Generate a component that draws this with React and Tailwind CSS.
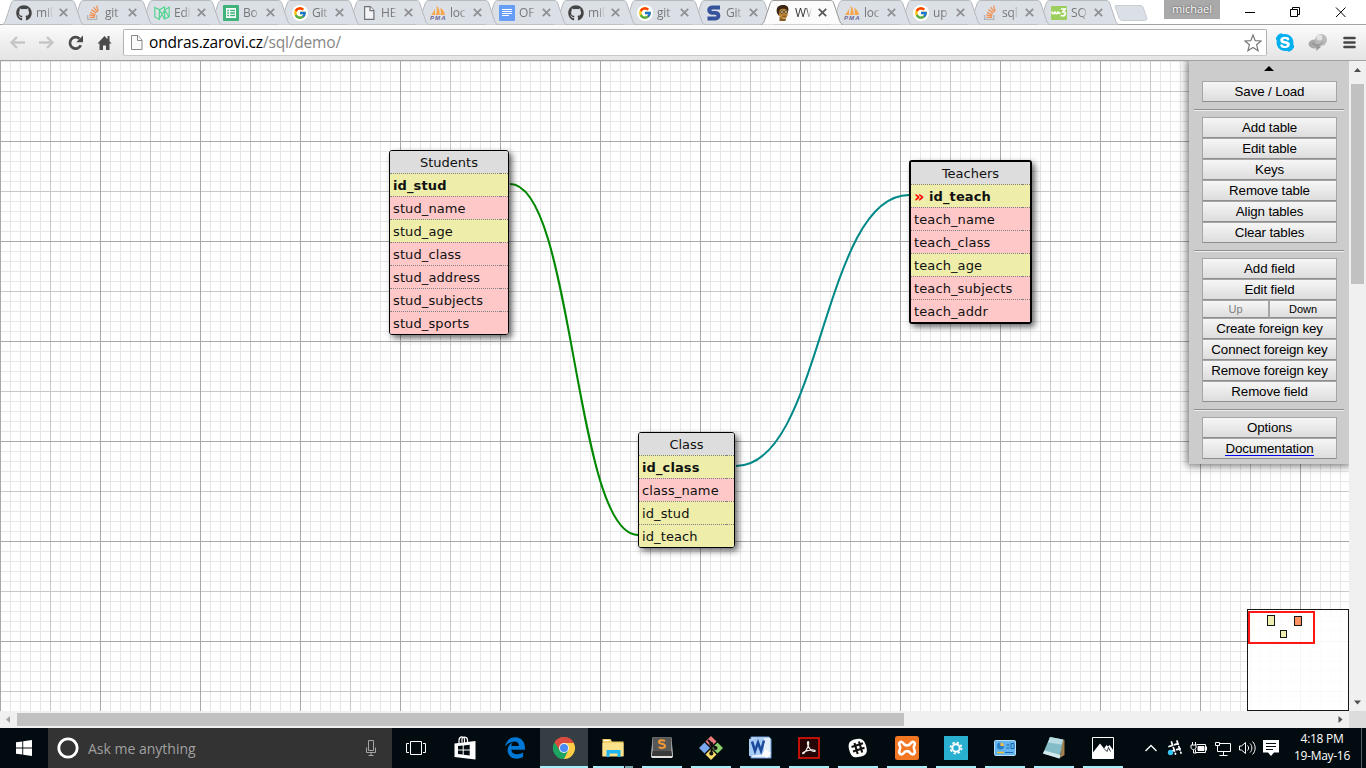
import React from "react";
import { FaGithub, FaSkype, FaEdgeLegacy } from "react-icons/fa";
import { FcGoogle } from "react-icons/fc";

const GoogleFav = () => (
  <svg viewBox="0 0 16 16" className="h-4 w-4">
    <circle cx="8" cy="8" r="8" fill="#fff" />
    <FcGoogle x="1" y="1" width="14" height="14" size="14" />
  </svg>
);

const PageFav = () => (
  <svg viewBox="0 0 16 16" className="h-4 w-4" fill="#f3f4f6" stroke="#6e7276" strokeWidth="1.2">
    <path d="M3.6 1.6h5.6l3.7 3.8v9H3.6z" />
    <path d="M9 1.6v4h3.9" />
  </svg>
);

const StackFav = () => (
  <svg viewBox="0 0 16 16" className="h-4 w-4" fill="none">
    <path d="M2.6 10v4.4h9.2V10" stroke="#b2b4b8" strokeWidth="1.3" />
    <path d="M4.4 12.4h5.6M4.5 10l5.6 1M5 7.4l5.4 2.4M6.4 4.6l4.9 3.5M8.6 2.2l3.7 4.8M11.6.8l1.6 5.6" stroke="#f0945a" strokeWidth="1.3" />
  </svg>
);

const PmaFav = () => (
  <svg viewBox="0 0 16 16" className="h-4 w-4">
    <path d="M1 10C3 8 4 6 4.600 3.500L5.400 10zM6 10C7 7 7 4 6.600.5 9 3 10 7 9.600 10zM10.500 10C11 7 11 5 10 2.500 13 4 14.500 7 15 10z" fill="#f8a64b" />
    <text x="0" y="15.4" fontSize="6" fontWeight="bold" fontStyle="italic" fontFamily="Liberation Sans, sans-serif" fill="#6b6798" textLength="15.5">PMA</text>
  </svg>
);

const MediumFav = () => (
  <svg viewBox="0 0 16 16" className="h-4 w-4" fill="none" stroke="#4ed58c" strokeWidth="1.1">
    <path d="M.8 2.400 5.400 4.700V14.300L.8 12zM5.400 4.700 10.600 2v3.300L5.800 13M5.400 4.700l5.200 9.200 4.600-2.300V2.300L10.600 5.100v8.800M10.600 5.100 15.200 12" />
  </svg>
);

const SheetsFav = () => (
  <svg viewBox="0 0 16 16" className="h-4 w-4">
    <rect width="16" height="16" rx="1" fill="#40b37a" />
    <rect x="3" y="3" width="10" height="10" fill="#fff" />
    <path d="M4.200 5.500h1.800M7.200 5.500h4.800M4.200 8h1.800M7.200 8h4.800M4.200 10.500h1.800M7.200 10.500h4.800" stroke="#40b37a" strokeWidth="1.300" />
  </svg>
);

const DocsFav = () => (
  <svg viewBox="0 0 16 16" className="h-4 w-4">
    <rect width="16" height="16" rx="1" fill="#669df6" />
    <path d="M3 4.500h10M3 6.500h10M3 8.500h10M3 10.500h7" stroke="#fff" strokeWidth="1" />
  </svg>
);

const SFav = () => (
  <svg viewBox="0 0 16 16" className="h-4 w-4">
    <path d="M14 2.500H7C1.800 2.500 2.300 7.900 6.500 7.900h2.500c4.500 0 4.500 5.600.3 5.600H1.500" fill="none" stroke="#35549b" strokeWidth="3.900" />
  </svg>
);

const FaceFav = () => (
  <svg viewBox="0 0 16 16" className="h-4 w-4">
    <path d="M2 8C.5 2 4 0 8 0c4.500 0 6 2.500 5.200 6L12 9 4 11z" fill="#3a2411" />
    <path d="M4.500 5c2-1.800 5.500-1.800 7.500 0l.8 5-1.800 3.300-4 .7L4 10.500z" fill="#c08638" />
    <path d="M4.500 11.500l3 2.500 3.500-.5L10.500 16H4.500z" fill="#8a5a20" />
    <circle cx="7" cy="7" r="1.400" fill="#efe3b8" stroke="#3b2a18" strokeWidth=".8" />
    <circle cx="11" cy="7" r="1.400" fill="#efe3b8" stroke="#3b2a18" strokeWidth=".8" />
    <path d="M7.500 11.200h4" stroke="#7c4a1b" />
  </svg>
);

const W3Fav = () => (
  <svg viewBox="0 0 16 16" className="h-4 w-4">
    <rect width="16" height="14" y="1" rx="1" fill="#9ccf5e" />
    <path d="M.8 6.500c.5 3 2.500 3 3 0 .5 3 2.500 3 3 0 .5 2 1.500 2.500 2.500 1M10 4h4.200L12 7c4-.5 3 5-2.300 3.500" fill="none" stroke="#fff" strokeWidth="1.600" />
  </svg>
);

const GithubFav = () => <FaGithub size={16} color="#444" />;

const tabs = [
  { Icon: GithubFav, t: "mil" },
  { Icon: StackFav, t: "git" },
  { Icon: MediumFav, t: "Edi" },
  { Icon: SheetsFav, t: "Bo" },
  { Icon: GoogleFav, t: "Git" },
  { Icon: PageFav, t: "HE" },
  { Icon: PmaFav, t: "loc" },
  { Icon: DocsFav, t: "OF" },
  { Icon: GithubFav, t: "mil" },
  { Icon: GoogleFav, t: "git" },
  { Icon: SFav, t: "Git" },
  { Icon: FaceFav, t: "WW", active: true },
  { Icon: PmaFav, t: "loc" },
  { Icon: GoogleFav, t: "up" },
  { Icon: StackFav, t: "sql" },
  { Icon: W3Fav, t: "SQ" },
];

function Tab({ Icon, t, active, z }) {
  return (
    <div className="relative h-[25px] w-[69px] shrink-0" style={{ zIndex: z }}>
      <svg className="absolute top-0 left-0 h-[25px] w-[82px]" viewBox="0 0 82 25">
        <path
          d="M0 24.500C2 24 2.500 23 3.500 20.500L9 4C9.800 1.500 10.500.5 13 .5H69C71.500.5 72.200 1.500 73 4L78.500 20.500C79.500 23 80 24 82 24.500"
          fill={active ? "#fbfbfb" : "#dbdfe6"}
          stroke={active ? "#999" : "#b6b9be"}
        />
      </svg>
      <div className="relative flex h-[25px] items-center pl-[14px]">
        <div className="flex h-4 w-4 shrink-0 items-center"><Icon /></div>
        <div
          className={
            "ml-[4px] w-[17px] overflow-hidden [mask-image:linear-gradient(to_right,black_60%,transparent)] font-['Open_Sans',sans-serif] text-[12px] leading-[18px] tracking-[-0.2px] whitespace-nowrap " +
            (active ? "text-[#333]" : "text-[#777]")
          }
        >
          {t}
        </div>
        <svg viewBox="0 0 9 9" className="ml-[6px] h-[9px] w-[9px] shrink-0" stroke={active ? "#555" : "#8d8f93"} strokeWidth="1.700">
          <path d="M.8.800l7.400 7.400M8.200.800L.8 8.200" />
        </svg>
      </div>
    </div>
  );
}

function TabStrip() {
  return (
    <div className="relative z-10 flex h-[25px] items-start bg-white pl-[2px] shadow-[inset_0_-1px_0_#a3a3a3]">
      {tabs.map((tab, i) => (
        <Tab key={i} {...tab} z={tab.active ? 40 : 30 - i} />
      ))}
      <svg className="ml-[8px] mt-[4px] h-[18px] w-[34px] shrink-0" viewBox="0 0 34 18">
        <path d="M2 1.500h24c2 0 2.500.5 3.200 2l3.300 9.500c.8 2.500 0 3.500-2 3.500H9c-2 0-3-.5-3.700-2L1.500 4C1 2.500 1 1.500 2 1.500z" fill="#dbdfe6" stroke="#c9ccd1" />
      </svg>
      <div className="ml-[16px] flex h-[19px] w-[56px] items-center justify-center bg-[#a9a9a9] font-['Open_Sans',sans-serif] text-[11px] text-white [text-shadow:0_0_2px_#333]">
        <span className="-mt-[1px]">michael</span>
      </div>
      <svg className="ml-auto h-[24px] w-[130px]" viewBox="1236 0 130 24" fill="none" stroke="#000">
        <path d="M1245 12.500h10M1290.500 9.500h7v7h-7zM1292.500 9v-1.500h7v7h-1.500M1336 7.500l9.500 9.500M1345.500 7.500L1336 17" />
      </svg>
    </div>
  );
}

function Toolbar() {
  return (
    <div className="flex h-[36px] items-center border-b border-[#a2a2a2] bg-gradient-to-b from-[#fbfbfb] to-[#e4e4e4]">
      <svg className="h-[35px] w-[123px] shrink-0" viewBox="0 25 123 35" fill="none">
        <path d="M25 42.500H11.500M17 37l-5.500 5.500L17 48M39 42.500h13.500M47 37l5.500 5.500L47 48" stroke="#c6c6c6" strokeWidth="2.400" />
        <path d="M80.800 45.300A5.700 5.700 0 1 1 79.500 38.700" stroke="#4b4b4b" strokeWidth="2.700" />
        <path d="M83 35.500v6.800h-6.800z" fill="#4b4b4b" />
        <path d="M97.500 43.500L104.500 36l3 3.200V36h2v5.300l2.200 2.200H109.500V50H106v-4.500h-3V50H99.500v-6.500z" fill="#4b4b4b" />
      </svg>
      <div className="flex h-[27px] w-[1144px] items-center rounded-[2px] border border-[#b2b2b2] border-b-[#c8c8c8] bg-white pr-[4px] pl-[6px]">
        <svg viewBox="0 0 13 16" className="h-4 w-[13px]" fill="#fafafa" stroke="#8a8a8a">
          <path d="M1.500.5h6.500l4 4.500v9.500h-10.500z" />
          <path d="M7.500.5v5h4.500" />
        </svg>
        <div className="ml-[6px] pb-[2px] font-['Open_Sans',sans-serif] text-[15.500px] leading-[20px] tracking-[-0.170px] text-[#858585]">
          <span className="text-black">ondras.zarovi.cz</span>/sql/demo/
        </div>
        <svg viewBox="0 0 18 18" className="ml-auto h-[18px] w-[18px]" fill="#fff" stroke="#777" strokeWidth="1.200">
          <path d="M9 1l2.200 5.600 5.900.4-4.500 3.800 1.500 5.900L9 13.500l-5.100 3.200 1.500-5.900L.9 7l5.900-.4z" />
        </svg>
      </div>
      <div className="flex h-[35px] w-[99px] shrink-0 items-center">
        <div className="ml-[8px] flex h-[20px] w-[20px] items-center justify-center">
          <FaSkype size={21} color="#00aff0" className="rounded-full bg-[radial-gradient(circle,white_50%,transparent_51%)]" />
        </div>
        <svg className="h-[35px] w-[71px] shrink-0" viewBox="1295 25 71 35">
          <ellipse cx="1315" cy="44" rx="6.500" ry="4.500" fill="#a9a9a9" />
          <path d="M1317 45l-1 6 5-4z" fill="#999" />
          <circle cx="1321" cy="40" r="6" fill="#b9b9b9" />
          <circle cx="1319.500" cy="37.500" r="3" fill="#e2e2e2" />
          <path d="M1312 43c2 3 8 3 11-1" fill="none" stroke="#8b8b8b" />
          <path d="M1344.500 38h10M1344.500 42.500h10M1344.500 47h10" stroke="#474747" strokeWidth="2.600" strokeLinecap="round" />
        </svg>
      </div>
    </div>
  );
}

function Row({ name, kind, bold, mark }) {
  const bg = { num: "bg-[#eeeeaa]", txt: "bg-[#ffc8c8]", head: "bg-[#dddddd]" }[kind];
  return (
    <div className={"flex h-[23px] first:h-[22px] " + bg}>
      {kind === "head" ? (
        <div className="flex-1 text-center leading-[23px]">{name}</div>
      ) : (
        <>
          <div className={"flex flex-1 border-t border-dotted border-[#808080] pl-[3px] leading-[24px] tracking-[0.110px] whitespace-nowrap " + (bold ? "font-bold" : "")}>
            {mark && <span className="w-[15px] text-[16px] leading-[23px] text-[#ff0000]">»</span>}
            {name}
          </div>
          <div className="w-[8px] border-t border-dotted border-[#808080]" />
        </>
      )}
    </div>
  );
}

function DbTable({ place, title, rows }) {
  return (
    <div className={"absolute rounded-[3px] border-black font-['DejaVu_Sans',sans-serif] text-[13px] text-[#111] shadow-[3px_3px_6px_rgba(0,0,0,0.6)] overflow-clip " + place}>
      <Row name={title} kind="head" />
      {rows.map((r) => (
        <Row key={r[0]} name={r[0]} kind={r[1]} bold={r[2]} mark={r[3]} />
      ))}
    </div>
  );
}

const Btn = ({ children, small, disabled, link }) => (
  <button
    className={
      "flex items-center justify-center border border-[#a5a5a5] border-b-[#8f8f8f] bg-gradient-to-b from-[#f6f6f6] to-[#dddddd] rounded-[1px] font-['Liberation_Sans',sans-serif] " +
      (small ? "h-[18px] text-[11px] " : "h-[21px] w-full text-[13.333px] tracking-[-0.120px] ") +
      (disabled ? "w-[67px] text-[#808080] " : "text-black ") +
      (small && !disabled ? "w-[68px] " : "")
    }
  >
    {link ? <span className="border-b border-[#0000ee] leading-[13px]">{children}</span> : children}
  </button>
);

const Rule = () => <div className="-mr-[7px] -ml-[8px] my-[7px] h-[2px] border-t border-b border-t-[#8f8f8f] border-b-[#eeeeee]" />;

function Sidebar() {
  return (
    <div className="absolute top-0 right-0 h-[403px] w-[160px] bg-[#cccccc] pr-[12px] pl-[13px] shadow-[0_0_8px_2px_rgba(0,0,0,0.550)]">
      <div className="flex h-[20px] justify-center pt-[5px] pr-[1px]">
        <svg viewBox="0 0 10 5" className="h-[5px] w-[10px]"><path d="M0 5L5 0l5 5z" /></svg>
      </div>
      <Btn>Save / Load</Btn>
      <Rule />
      <div className="-mt-[1px]">
        <Btn>Add table</Btn>
        <Btn>Edit table</Btn>
        <Btn>Keys</Btn>
        <Btn>Remove table</Btn>
        <Btn>Align tables</Btn>
        <Btn>Clear tables</Btn>
      </div>
      <Rule />
      <div className="-mt-[1px]">
        <Btn>Add field</Btn>
        <Btn>Edit field</Btn>
        <div className="flex">
          <Btn small disabled>Up</Btn>
          <Btn small>Down</Btn>
        </div>
        <Btn>Create foreign key</Btn>
        <Btn>Connect foreign key</Btn>
        <Btn>Remove foreign key</Btn>
        <Btn>Remove field</Btn>
      </div>
      <Rule />
      <div className="-mt-[1px]">
        <Btn>Options</Btn>
        <Btn link>Documentation</Btn>
      </div>
    </div>
  );
}

function Minimap() {
  return (
    <div className="absolute right-0 bottom-0 h-[102px] w-[102px] border border-black bg-white opacity-90">
      <div className="absolute top-[5px] left-[19px] h-[11px] w-[8px] border border-black bg-[#eeeeaa]" />
      <div className="absolute top-[6px] left-[46px] h-[10px] w-[8px] border border-black bg-[#ff8855]" />
      <div className="absolute top-[20px] left-[32px] h-[8px] w-[7px] border border-black bg-[#eeeeaa]" />
      <div className="absolute top-[1px] left-0 h-[33px] w-[67px] border-2 border-[#ff0000]" />
    </div>
  );
}

function Canvas() {
  return (
    <div className="relative h-[650px] w-[1349px] overflow-hidden bg-white">
      <svg className="absolute inset-0 h-[650px] w-[1349px]" viewBox="0 0 1349 650">
        <defs>
          <pattern id="grid" width="100" height="100" y="-20" patternUnits="userSpaceOnUse">
            <g shapeRendering="crispEdges" fill="none">
              <path
                stroke="#e6e6e6"
                d="M10.500 0v100M20.500 0v100M30.500 0v100M40.500 0v100M60.500 0v100M70.500 0v100M80.500 0v100M90.500 0v100M0 10.500h100M0 20.500h100M0 30.500h100M0 40.500h100M0 60.500h100M0 70.500h100M0 80.500h100M0 90.500h100"
              />
              <path stroke="#c8c8c8" d="M50.500 0v100M0 50.500h100" />
              <path stroke="#a8a8a8" d="M.5 0v100M0 .5h100" />
            </g>
          </pattern>
        </defs>
        <rect width="1349" height="650" fill="url(#grid)" />
        <path d="M510 123C574 123 574 474 638 474" fill="none" stroke="#008800" strokeWidth="2" />
        <path d="M736 405C822 405 822 134 909 134" fill="none" stroke="#008888" strokeWidth="2" />
      </svg>
      <DbTable
        place="left-[389px] top-[89px] w-[120px] border"
        title="Students"
        rows={[
          ["id_stud", "num", true],
          ["stud_name", "txt"],
          ["stud_age", "num"],
          ["stud_class", "txt"],
          ["stud_address", "txt"],
          ["stud_subjects", "txt"],
          ["stud_sports", "txt"],
        ]}
      />
      <DbTable
        place="left-[909px] top-[99px] w-[123px] border-2"
        title="Teachers"
        rows={[
          ["id_teach", "num", true, true],
          ["teach_name", "txt"],
          ["teach_class", "txt"],
          ["teach_age", "num"],
          ["teach_subjects", "txt"],
          ["teach_addr", "txt"],
        ]}
      />
      <DbTable
        place="left-[638px] top-[371px] w-[97px] border"
        title="Class"
        rows={[
          ["id_class", "num", true],
          ["class_name", "txt"],
          ["id_stud", "num"],
          ["id_teach", "num"],
        ]}
      />
      <Sidebar />
      <Minimap />
    </div>
  );
}

const Arrow = ({ d, fill = "#505050" }) => (
  <svg viewBox="0 0 17 17" className="h-[17px] w-[17px] shrink-0"><path d={d} fill={fill} /></svg>
);

const I = ({ children }) => (
  <svg viewBox="0 0 24 24" className="h-[24px] w-[24px]" fill="none">{children}</svg>
);

const TaskViewIcon = () => (
  <I>
    <path d="M6.500 5.500h11v13h-11zM5 7.500H2.500v9H5M19 7.500h2.500v9H19" stroke="#fff" />
  </I>
);
const StoreIcon = () => (
  <I>
    <path d="M1.500 7.500l21-2.500v18.500L1.500 21z" fill="#fff" />
    <path d="M6 7V4.500C6 0 11 0 11.500 3V7M9 6.500V3c0-3 5.500-2.500 5.500 1V6" stroke="#fff" strokeWidth="1.200" />
    <path d="M5 10l4.700-.5v4H5zM10.700 9.400l6-.7v4.800h-6zM5 14.500h4.700v4L5 18zM10.700 14.500h6v5l-6-.8z" fill="#020b0f" />
  </I>
);
const EdgeIcon = () => <FaEdgeLegacy size={22} color="#0078d7" />;
const ChromeIcon = () => (
  <I>
    <path d="M12 12L2.470 6.500A11 11 0 0 1 21.530 6.500z" fill="#db4b3f" />
    <path d="M12 12L2.470 6.500A11 11 0 0 0 12 23z" fill="#1da462" />
    <path d="M12 12L12 23A11 11 0 0 0 21.530 6.500H12z" fill="#ffcd46" />
    <path d="M12 7H21.800A11 11 0 0 0 2.470 6.500L7.700 14.500z" fill="#db4b3f" />
    <path d="M7.500 14.500L2.470 6.500A11 11 0 0 0 12 23L16.300 14.500z" fill="#1da462" />
    <circle cx="12" cy="12" r="5" fill="#f1f1f1" />
    <circle cx="12" cy="12" r="4" fill="#4c8bf5" />
  </I>
);
const ExplorerIcon = () => (
  <I>
    <path d="M1.500 3h8l1.500 2.500h11.500V20h-21z" fill="#f1ce66" />
    <path d="M1.500 7h21v13.500h-21z" fill="#fae28c" />
    <path d="M2.500 4.500h6" stroke="#fff" />
    <path d="M5.500 14h14v7h-3v-3.500h-8V21h-3z" fill="#1fb5f0" />
  </I>
);
const SublimeIcon = () => (
  <I>
    <path d="M2.500 1.500h19l1.500 19-1 1.500H2L1 20.500z" fill="#e0e0e0" />
    <rect x="2.500" y="1.500" width="19" height="14.500" rx="1.500" fill="#575757" />
    <path d="M2.500 15h19l.8 5H1.700z" fill="#3a3a3a" />
    <path d="M15 5c-2.500-1.300-6-1-6 .9 0 2.300 6 1.400 6 4 0 2.300-3.500 2.500-6.300 1.200" stroke="#f49a35" strokeWidth="2" />
  </I>
);
const GitIcon = () => (
  <I>
    <path d="M12 0l5.500 5.500L12 11 6.500 5.500z" fill="#ee7b80" />
    <path d="M18.500 6.500L24 12l-5.500 5.500L13 12z" fill="#8cd16b" />
    <path d="M12 13l5.500 5.500L12 24l-5.500-5.500z" fill="#f7dc6b" />
    <path d="M5.500 6.500L11 12l-5.500 5.500L0 12z" fill="#79a8ef" />
    <path d="M9 4l3.500 3.500v10M12.500 8l4 4" stroke="#111" strokeWidth="2" />
    <circle cx="12.300" cy="8" r="2" fill="#111" /><circle cx="16.500" cy="12" r="2" fill="#111" /><circle cx="12.300" cy="17.500" r="2" fill="#111" />
  </I>
);
const WordIcon = () => (
  <I>
    <path d="M3 1h18l2 2v19H3z" fill="#e4effc" stroke="#6c9bdc" />
    <path d="M1 3l15-2v17L1 20z" fill="#a9ccf5" />
    <path d="M4 5.500l3 9.500 3-8.500 3 8.500 3-10.500" stroke="#1b4a9b" strokeWidth="2.500" />
    <path d="M17 13l6 4-4 5-5-3z" fill="#fff" />
  </I>
);
const AcrobatIcon = () => (
  <I>
    <rect x="2" y="2" width="20" height="20" fill="#250505" stroke="#e01208" strokeWidth="1.700" />
    <path d="M6 16.500c-1 1.500.5 2 2-.5 2-3 4-7 3.700-9.500-.7-2-2 0-.7 3 1.500 3.500 4 6 6.500 6 1.800-.3.500-2-3-1.700-3 .2-5 .8-8.500 2.700z" stroke="#eee" strokeWidth="1.200" />
  </I>
);
const SlackIcon = () => (
  <I>
    <path d="M8 3.500c7-2 10-.500 12 6 2 7 .5 9.500-5 11-7 2-9.500.500-11.500-5.500-2-7-.5-10 4.500-11.500z" fill="#fff" />
    <path d="M8.500 7l3.200 11M13 5.500l3.200 11M5.500 11l11.500-3.700M7 15.500l11.500-3.700" stroke="#111" strokeWidth="2.100" />
  </I>
);
const XamppIcon = () => (
  <I>
    <rect width="24" height="24" rx="2.500" fill="#f37623" />
    <path d="M8.500 7.500C6 4 3 7 4.800 9.800c.9 1.200.9 2.200 0 3.700-2 4 1.500 6.500 3.900 3.500 1.500-2.500 5-2.500 6.600 0 2.400 3 5.900.5 3.900-3.500-.9-1.500-.9-2.500 0-3.700C21 7 18 4 15.500 7.500c-1.500 2.500-5.500 2.500-7 0z" stroke="#fff" strokeWidth="2.600" />
  </I>
);
const SettingsIcon = () => (
  <I>
    <rect width="24" height="24" fill="#29b0d0" />
    <circle cx="12" cy="12" r="3.700" stroke="#fff" strokeWidth="2" />
    <circle cx="12" cy="12" r="5.500" stroke="#fff" strokeWidth="1.800" strokeDasharray="2.300 2.020" />
  </I>
);
const PanelIcon = () => (
  <I>
    <rect x="1.500" y="4.500" width="21" height="15" rx="1" fill="#63b5ef" stroke="#b7ddf7" />
    <circle cx="7.500" cy="10" r="3.500" fill="#2a7fc4" />
    <path d="M7.500 10V6.500A3.500 3.500 0 0 1 11 10z" fill="#f6c04a" />
    <path d="M13.500 9h3M13.500 12h3M18 7.500h3v5h-3z" stroke="#1d66aa" />
    <path d="M4 16.500h7" stroke="#f0bd31" strokeWidth="1.500" /><path d="M12 16.500h8" stroke="#1d66aa" />
  </I>
);
const NotepadIcon = () => (
  <I>
    <path d="M20 3l2.500 1v15L18 22z" fill="#a08050" />
    <path d="M8 1l13 2.500L17.500 22.500 1 17.500z" fill="#84bdc8" />
    <path d="M8 1l13 2.500-1.500 5L6 6.500z" fill="#b9dce2" />
    <path d="M2.500 14.500l16 4.500-1 3.500L1 17.500z" fill="#d3eaee" />
  </I>
);
const PhotosIcon = () => (
  <I>
    <path d="M1.500 1.500h21v21h-21z" stroke="#fff" />
    <path d="M1.500 17l7.500-9.500 4 5 2.500-3.500 1.500 1.500L18.500 9l4 5.500v8h-21z" fill="#fff" />
    <path d="M13 12.500l3 3 1.500-4 2 4" stroke="#020b0f" strokeWidth=".8" />
  </I>
);

const apps = [
  ["taskview", TaskViewIcon, "none"],
  ["store", StoreIcon, "none"],
  ["edge", EdgeIcon, "none"],
  ["chrome", ChromeIcon, "active"],
  ["explorer", ExplorerIcon, "multi"],
  ["sublime", SublimeIcon, "open"],
  ["git", GitIcon, "open"],
  ["word", WordIcon, "open"],
  ["acrobat", AcrobatIcon, "open"],
  ["slack", SlackIcon, "open"],
  ["xampp", XamppIcon, "open"],
  ["settings", SettingsIcon, "open"],
  ["panel", PanelIcon, "open"],
  ["notepad", NotepadIcon, "open"],
  ["photos", PhotosIcon, "open"],
];

function Taskbar() {
  return (
    <div className="flex h-[40px] bg-[#020b0f]">
      <div className="flex h-[40px] w-[48px] items-center justify-center">
        <svg viewBox="0 0 16 16" className="h-4 w-4" fill="#fff">
          <path d="M0 2.300L6.300 1.400v6.100H0zM7.200 1.200L16 0v7.500H7.200zM0 8.500h6.300v6.100L0 13.700zM7.200 8.500H16V16l-8.800-1.200z" />
        </svg>
      </div>
      <div className="flex h-[40px] w-[344px] items-center bg-[#333333] pr-[14px] pl-[9px]">
        <svg viewBox="0 0 22 22" className="h-[22px] w-[22px]"><circle cx="11" cy="11" r="9.200" fill="none" stroke="#fff" strokeWidth="2.800" /></svg>
        <span className="ml-[9px] font-['Open_Sans',sans-serif] text-[14px] text-[#a0a0a0]">Ask me anything</span>
        <svg viewBox="0 0 14 18" className="ml-auto h-[18px] w-[14px]" fill="none" stroke="#a5a5a5">
          <path d="M4.500 1.500h5v10h-5zM2.500 8.500v5h9v-5M7 13.500v3M4.500 16.500h5" />
        </svg>
      </div>
      <div className="flex">
        {apps.map(([name, Icon, state]) => (
          <div key={name} className={"mr-[1px] flex h-[40px] w-[48px] flex-col items-center " + (state === "active" ? "bg-[#353e42] " : "") + (name === "edge" ? "ml-[1px]" : "")}>
            <div className="flex h-[38px] items-center justify-center pt-[2px]"><Icon /></div>
            {state === "active" && <div className="h-[2px] w-full bg-[#a6eef8]" />}
            {state === "open" && <div className="h-[2px] w-[40px] bg-[#a6eef8]" />}
            {state === "multi" && (
              <div className="flex h-[2px] w-[40px]">
                <div className="w-[31px] bg-[#a6eef8]" />
                <div className="ml-[1px] flex-1 bg-[#7aa9b2]" />
              </div>
            )}
          </div>
        ))}
      </div>
      <svg className="ml-auto h-[40px] w-[144px] shrink-0" viewBox="1142 728 144 40" fill="none" stroke="#fff">
        <path d="M1145.500 751l5.500-5.500 5.500 5.500" strokeWidth="1.300" />
        <path d="M1171.500 742l4 12M1177 741l4 12M1169 746.500l11-3.500M1171 751.500l11-3.500" strokeWidth="1.800" strokeLinecap="round" strokeDasharray="3.500 2.500" />
        <circle cx="1170.500" cy="752.500" r="2.700" fill="#35c5f4" stroke="none" />
        <path d="M1196.500 744.500h9v8h-10v-3M1206.500 746.500v4M1191 745h5v3c-1 2-4 2-5 0zM1192.500 742v3M1195.500 742v3M1193.500 750v3h3" />
        <path d="M1198 746.500h6v4h-6z" fill="#fff" />
        <path d="M1219.500 743.500h11v8h-13v-5M1223.500 752v3M1219.500 755.500h8M1215.500 742.500h4v3h-4zM1217.500 746v5" />
        <path d="M1239.500 746v4h2l4 3.500v-11l-4 3.500zM1247.500 745.500c1.500 1.500 1.500 3.500 0 5M1250 743.500c2.500 2.500 2.500 6.500 0 9M1252.500 741.500c3.500 3.500 3.500 9.500 0 13" />
        <path d="M1263 740h16v12.500h-5l-3 3.500-3-3.500h-5z" fill="#fff" stroke="none" />
        <path d="M1266 743.500h10M1266 746.500h10M1266 749.500h7" stroke="#020b0f" />
      </svg>
      <div className="flex w-[72px] shrink-0 flex-col items-center justify-center pb-[3px] font-['Open_Sans',sans-serif] text-[12px] leading-[17px] tracking-[-0.300px] whitespace-nowrap text-white">
        <span>4:18 PM</span>
        <span>19-May-16</span>
      </div>
      <div className="ml-[3px] w-[5px] shrink-0 border-l border-[#536064]" />
    </div>
  );
}

export default function App() {
  return (
    <div className="h-[768px] w-[1366px] overflow-hidden bg-white">
      <TabStrip />
      <Toolbar />
      <div className="flex h-[650px]">
        <Canvas />
        <div className="flex w-[17px] flex-col items-center bg-[#f0f0f0]">
          <Arrow d="M5 11l3.500-4 3.500 4z" />
          <div className="mt-[6px] h-[200px] w-[13px] bg-[#c1c1c1]" />
          <div className="mt-auto"><Arrow d="M5 6.500l3.500 4 3.500-4z" /></div>
        </div>
      </div>
      <div className="flex h-[17px] items-center bg-[#f0f0f0]">
        <Arrow d="M10 5L6 8.500l4 3.500z" fill="#a3a3a3" />
        <div className="h-[13px] w-[887px] bg-[#c1c1c1]" />
        <div className="ml-auto h-[17px]"><Arrow d="M6.500 5l4 3.500-4 3.500z" /></div>
        <div className="h-[17px] w-[17px] bg-[#dcdcdc]" />
      </div>
      <Taskbar />
    </div>
  );
}
